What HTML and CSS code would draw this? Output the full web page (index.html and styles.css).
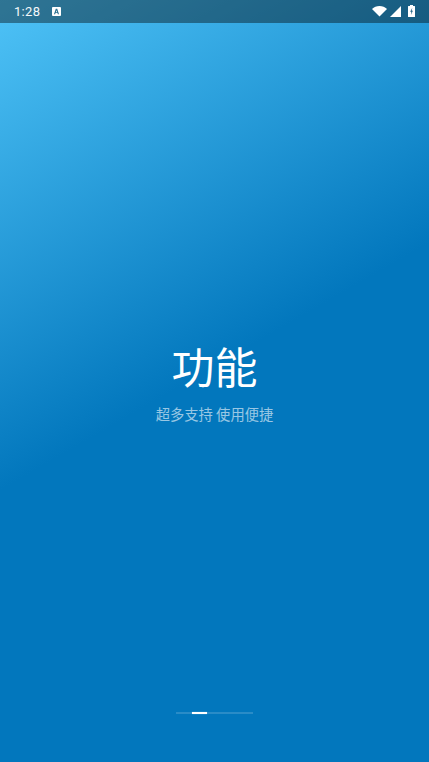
FILE: index.html
```html
<!DOCTYPE html>
<html lang="zh-CN">
<head>
<meta charset="utf-8">
<title>功能</title>
<link rel="stylesheet" href="styles.css">
</head>
<body>
<div class="screen">
  <header class="status">
    <div class="status-left">
      <span class="time">1:28</span>
      <svg class="ic-a" width="9" height="9" viewBox="0 0 10 10"><path fill-rule="evenodd" fill="#fff" d="M1 0h8a1 1 0 0 1 1 1v8a1 1 0 0 1-1 1H1a1 1 0 0 1-1-1V1a1 1 0 0 1 1-1zM4.200 2 2.200 8h1.300l.4-1.300h2.200L6.500 8h1.300L5.800 2zM5 3.600l.7 2.100H4.300z"/></svg>
    </div>
    <div class="status-right">
      <svg width="15" height="11" viewBox="0 0 15 12" preserveAspectRatio="none"><path fill="#fff" d="M0 3.200C2 1.300 4.600 0 7.500 0s5.500 1.300 7.500 3.200L7.500 11.500z"/></svg>
      <svg width="11" height="11" viewBox="0 0 11 11"><path fill="#fff" d="M11 0v11H0z"/></svg>
      <svg class="ic-batt" width="7" height="12" viewBox="0 0 7 12"><path fill-rule="evenodd" fill="#fff" d="M2 0h3v1h1.500a.5.5 0 0 1 .5.500v10a.5.5 0 0 1-.5.500h-6a.5.5 0 0 1-.5-.500v-10a.5.5 0 0 1 .5-.500H2zM4.300 2.800 2.200 6.800h1.200L2.900 10l2-4.200H3.700z"/></svg>
    </div>
  </header>
  <main class="content">
    <h1 class="title">功能</h1>
    <p class="subtitle">超多支持 使用便捷</p>
  </main>
  <div class="pager"><div class="pager-thumb"></div></div>
</div>
</body>
</html>
```
FILE: styles.css
```css
* { box-sizing: border-box; }
html, body { margin: 0; padding: 0; height: 100%; }
body { overflow: hidden; font-family: "Noto Sans CJK SC", "Noto Sans", sans-serif; }

.screen {
  width: 429px;
  height: 762px;
  display: flex;
  flex-direction: column;
  background: linear-gradient(150deg, #4fc3f7 0, #0277bd 425px);
  color: #fff;
}

.status {
  height: 23px;
  flex: none;
  display: flex;
  justify-content: space-between;
  align-items: center;
  padding: 0 14px;
  background: rgba(0, 0, 0, 0.4);
}
.status-left { display: flex; align-items: center; gap: 12px; }
.status-right { display: flex; align-items: center; gap: 3px; }
.time { font: 13px/23px Roboto, sans-serif; letter-spacing: 0.3px; color: #f4f8fa; }
.ic-a { display: block; }
.status-right svg { display: block; }
.ic-batt { margin: -1px 0 0 4px; }

.content {
  flex: none;
  padding-top: 311px;
  display: flex;
  flex-direction: column;
  align-items: center;
}
.title {
  margin: 0;
  font-size: 43px;
  font-weight: 400;
  line-height: 62px;
}
.subtitle {
  margin: 6px 0 0;
  font-size: 14.3px;
  line-height: 24px;
  color: rgba(255, 255, 255, 0.6);
}

.pager {
  flex: none;
  width: 77px;
  height: 2px;
  margin: 286px auto 0;
  padding-left: 16px;
  background: rgba(255, 255, 255, 0.16);
}
.pager-thumb { width: 15px; height: 2px; background: #fff; box-shadow: 0 0 1px rgba(255, 255, 255, 0.7); }
```
